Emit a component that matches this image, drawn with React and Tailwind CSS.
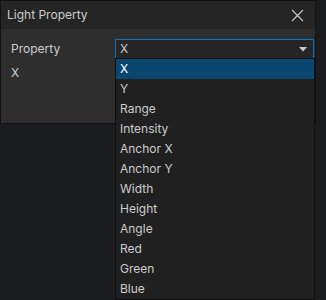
const items = ["X", "Y", "Range", "Intensity", "Anchor X", "Anchor Y", "Width", "Height", "Angle", "Red", "Green", "Blue"];

export default function App() {
  return (
    <div
      className="relative w-[326px] h-[300px] bg-[#1b1c1d] overflow-hidden text-[12px] text-[#cccccc]"
      style={{ fontFamily: "Inter, 'Noto Sans', sans-serif" }}
    >
      {/* Dialog */}
      <div className="w-[316px] border border-[#111111] bg-[#2e2e2e]">
        <div className="h-[28px] bg-[#252526] flex items-center justify-between pl-[6px] pr-[11px]">
          <span className="text-[#cccccc] text-[12px]">Light Property</span>
          <svg width="13" height="13" viewBox="0 0 13 13" className="text-[#cccccc]">
            <path d="M1 1 L12 12 M12 1 L1 12" stroke="currentColor" strokeWidth="1.1" />
          </svg>
        </div>
        <div className="h-[94px] pl-[10px] pt-[10px] pr-[1px]">
          <div className="flex items-center h-[20px]">
            <span className="w-[104px]">Property</span>
            <div className="flex-1 h-[20px] border border-[#0e70c0] bg-[#252525] flex items-center justify-between pl-[4px] pr-[6px]">
              <span>X</span>
              <svg width="8" height="5" viewBox="0 0 8 5">
                <path d="M0 0 H8 L4 4.5 Z" fill="#cccccc" />
              </svg>
            </div>
          </div>
          <div className="h-[20px] flex items-center mt-[4px]">X</div>
        </div>
      </div>

      {/* Dropdown list */}
      <div className="absolute left-[115px] top-[58px] w-[200px] border border-[#0f0f0f] bg-[#202020]">
        {items.map((it, i) => (
          <div
            key={it}
            className={`h-[20px] flex items-center pl-[4px] ${i === 0 ? "bg-[#094771] text-white" : "text-[#cccccc]"}`}
          >
            {it}
          </div>
        ))}
      </div>
    </div>
  );
}
